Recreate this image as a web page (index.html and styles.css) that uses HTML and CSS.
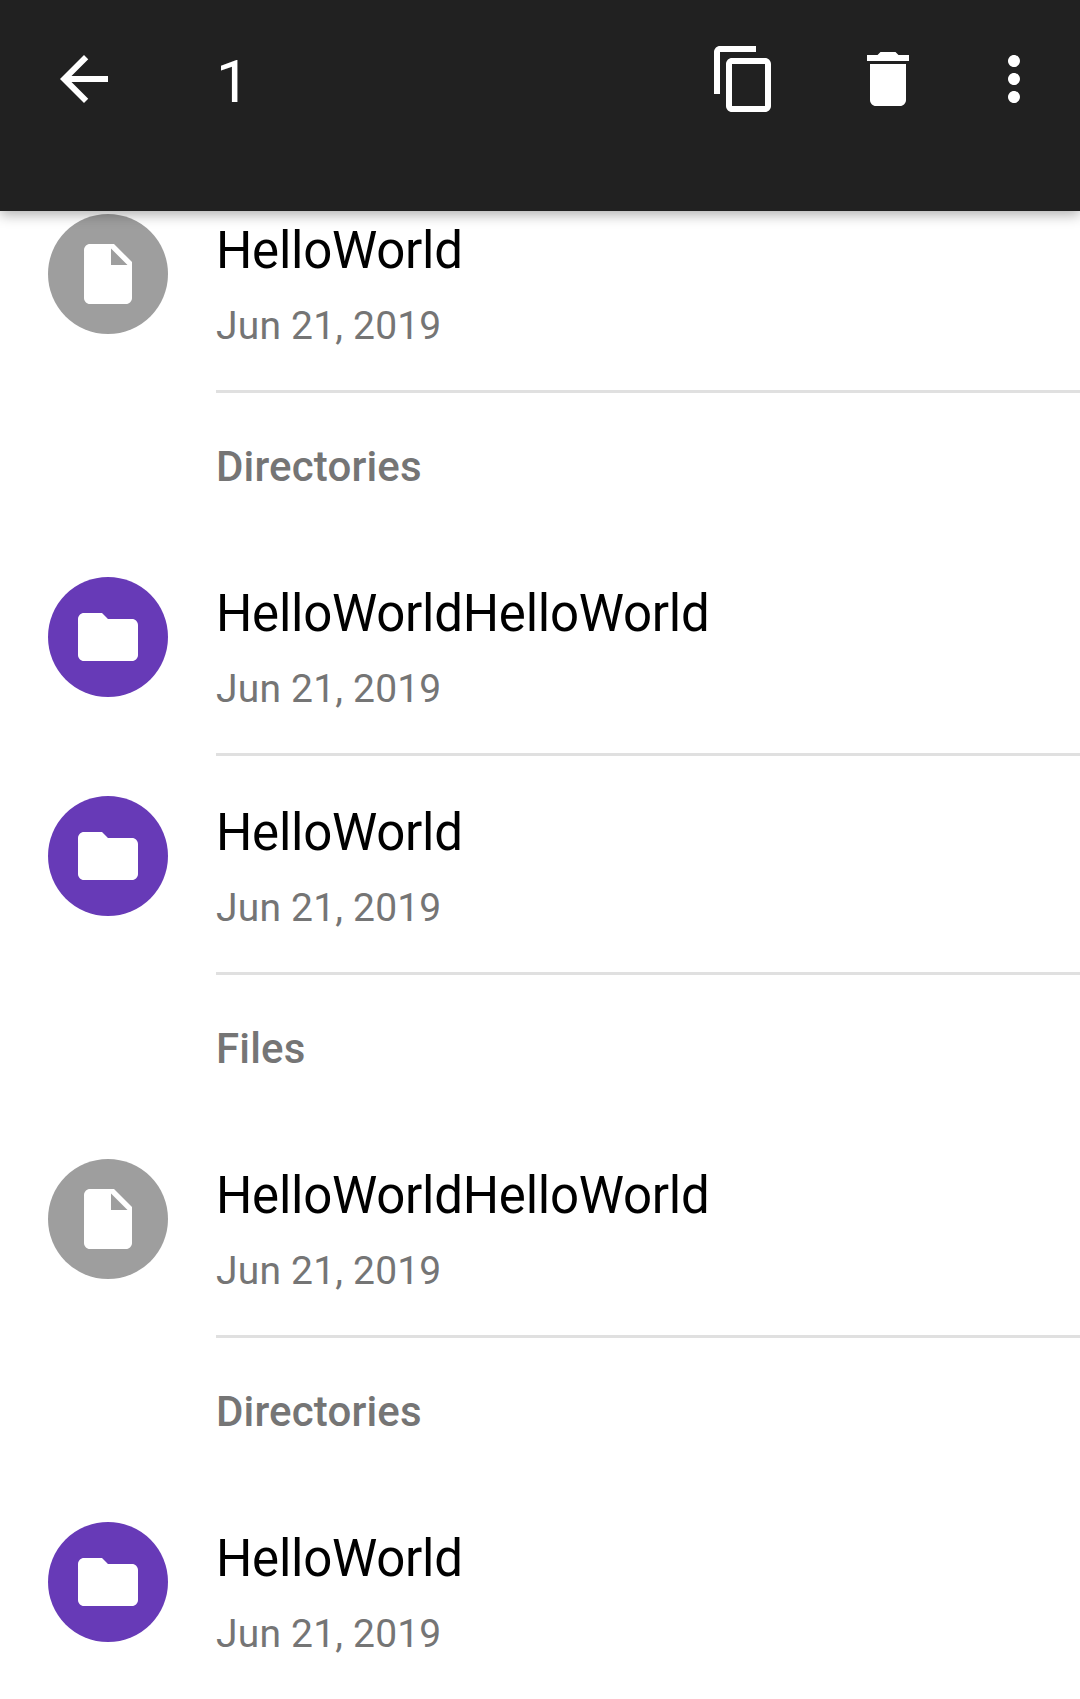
FILE: index.html
```html
<!DOCTYPE html>
<html lang="en">
<head>
<meta charset="utf-8">
<title>Files</title>
<link rel="stylesheet" href="styles.css">
</head>
<body>
<svg class="defs" aria-hidden="true">
  <symbol id="file" viewBox="0 0 24 24"><path d="M6 2c-1.100 0-1.990.9-1.990 2L4 20c0 1.100.89 2 1.990 2H18c1.100 0 2-.9 2-2V8l-6-6H6zm7 7V3.500L18.500 9H13z"/></symbol>
  <symbol id="folder" viewBox="0 0 24 24"><path d="M10 4H4c-1.100 0-1.990.9-1.990 2L2 18c0 1.100.9 2 2 2h16c1.100 0 2-.9 2-2V8c0-1.100-.9-2-2-2h-8l-2-2z"/></symbol>
</svg>
<header class="app-bar">
  <svg class="icon" viewBox="0 0 24 24"><path d="M20 11H7.830l5.590-5.590L12 4l-8 8 8 8 1.410-1.410L7.830 13H20v-2z"/></svg>
  <h1 class="count">1</h1>
  <div class="actions">
    <svg class="icon" viewBox="0 0 24 24"><path d="M16 1H4c-1.100 0-2 .9-2 2v14h2V3h12V1zm3 4H8c-1.100 0-2 .9-2 2v14c0 1.100.9 2 2 2h11c1.100 0 2-.9 2-2V7c0-1.100-.9-2-2-2zm0 16H8V7h11v14z"/></svg>
    <svg class="icon" viewBox="0 0 24 24"><path d="M6 19c0 1.100.9 2 2 2h8c1.100 0 2-.9 2-2V7H6v12zM19 4h-3.500l-1-1h-5l-1 1H5v2h14V4z"/></svg>
    <svg class="icon overflow" viewBox="0 0 24 24"><path d="M12 8c1.100 0 2-.9 2-2s-.9-2-2-2-2 .9-2 2 .9 2 2 2zm0 2c-1.100 0-2 .9-2 2s.9 2 2 2 2-.9 2-2-.9-2-2-2zm0 6c-1.100 0-2 .9-2 2s.9 2 2 2 2-.9 2-2-.9-2-2-2z"/></svg>
  </div>
</header>
<main class="list">
  <div class="row">
    <span class="avatar"><svg viewBox="0 0 24 24"><use href="#file"/></svg></span>
    <div class="text"><div class="name">HelloWorld</div><div class="date">Jun 21, 2019</div></div>
  </div>
  <h2 class="section">Directories</h2>
  <div class="row">
    <span class="avatar folder"><svg viewBox="0 0 24 24"><use href="#folder"/></svg></span>
    <div class="text"><div class="name">HelloWorldHelloWorld</div><div class="date">Jun 21, 2019</div></div>
  </div>
  <div class="row">
    <span class="avatar folder"><svg viewBox="0 0 24 24"><use href="#folder"/></svg></span>
    <div class="text"><div class="name">HelloWorld</div><div class="date">Jun 21, 2019</div></div>
  </div>
  <h2 class="section">Files</h2>
  <div class="row">
    <span class="avatar"><svg viewBox="0 0 24 24"><use href="#file"/></svg></span>
    <div class="text"><div class="name">HelloWorldHelloWorld</div><div class="date">Jun 21, 2019</div></div>
  </div>
  <h2 class="section">Directories</h2>
  <div class="row last">
    <span class="avatar folder"><svg viewBox="0 0 24 24"><use href="#folder"/></svg></span>
    <div class="text"><div class="name">HelloWorld</div><div class="date">Jun 21, 2019</div></div>
  </div>
</main>
</body>
</html>
```
FILE: styles.css
```css
* { box-sizing: border-box; }

body {
  margin: 0;
  height: 1699px;
  overflow: hidden;
  background: #fff;
  font-family: Roboto, sans-serif;
}

.defs { display: none; }

.app-bar {
  position: relative;
  z-index: 1;
  display: flex;
  align-items: flex-start;
  height: 211px;
  padding: 43px 30px 0 48px;
  background: #212121;
  color: #fff;
  box-shadow: 0 4px 12px rgba(0, 0, 0, .3);
}

.icon {
  display: block;
  flex: none;
  width: 72px;
  height: 72px;
  fill: #fff;
}

.count {
  margin: 0 0 0 96px;
  font-size: 60px;
  font-weight: 400;
  line-height: 77px;
}

.actions {
  display: flex;
  gap: 72px;
  margin-left: auto;
}

.overflow { margin-left: -18px; }

/* The list is scrolled so its first row starts under the app bar. */
.list { margin-top: -37px; }

.row {
  display: flex;
  gap: 48px;
  height: 219px;
  padding-left: 48px;
}

.avatar {
  display: flex;
  flex: none;
  align-items: center;
  justify-content: center;
  width: 120px;
  height: 120px;
  margin-top: 40px;
  border-radius: 50%;
  background: #9e9e9e;
}

.avatar.folder { background: #673ab7; }

.avatar svg {
  width: 72px;
  height: 72px;
  fill: #fff;
}

.text {
  flex: 1;
  padding-top: 47px;
  border-bottom: 3px solid #e0e0e0;
}

.row.last .text { border-bottom: 0; }

.name {
  color: #000;
  font-size: 51px;
  letter-spacing: -.26px;
  line-height: 60px;
}

.date {
  margin-top: 22px;
  color: #757575;
  font-size: 39px;
  letter-spacing: .2px;
  line-height: 46px;
}

.section {
  height: 144px;
  margin: 0;
  padding-left: 216px;
  color: #757575;
  font-size: 42px;
  font-weight: 500;
  letter-spacing: .15px;
  line-height: 148px;
}
```
